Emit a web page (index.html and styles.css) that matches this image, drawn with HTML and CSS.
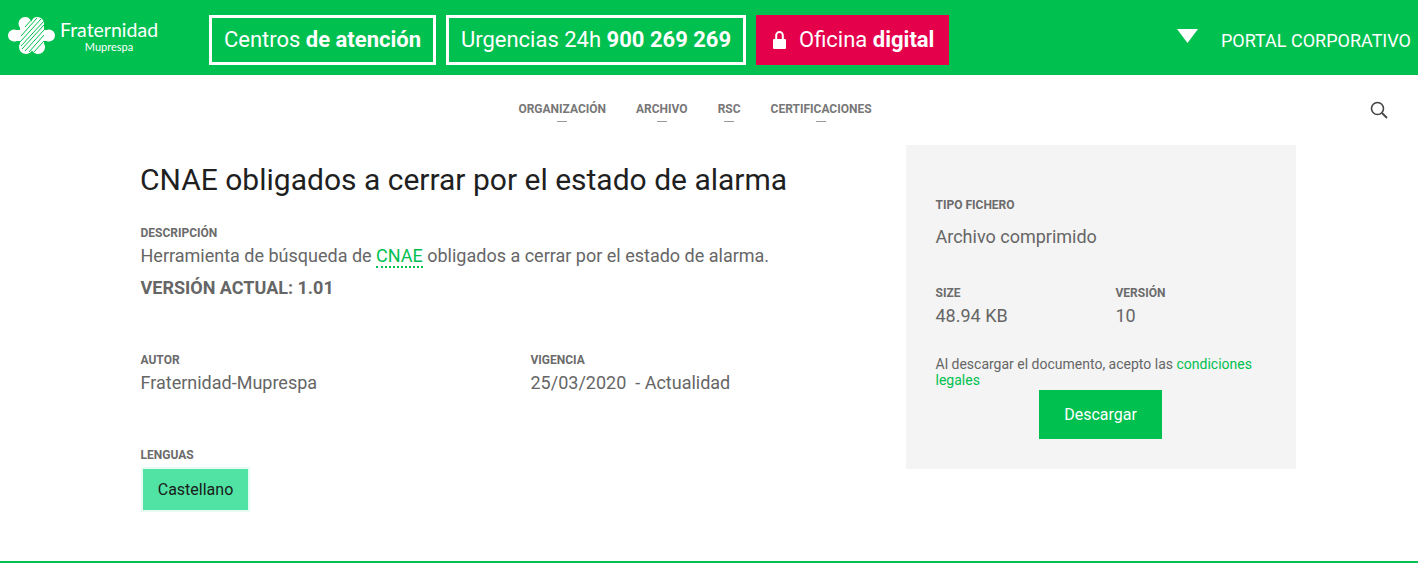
FILE: index.html
```html
<!DOCTYPE html>
<html lang="es">
<head>
<meta charset="utf-8">
<title>CNAE obligados a cerrar por el estado de alarma</title>
<link rel="stylesheet" href="styles.css">
</head>
<body>
<header class="topbar">
  <a class="logo" href="#">
    <svg class="logo-mark" width="47" height="37" viewBox="0 0 47 37">
      <defs>
        <clipPath id="clover">
          <circle cx="17" cy="6.5" r="6.5"/>
          <circle cx="29.5" cy="6.5" r="6.5"/>
          <circle cx="6" cy="18.5" r="6"/>
          <circle cx="41" cy="18.5" r="6"/>
          <circle cx="18" cy="30" r="7"/>
          <circle cx="30" cy="30" r="7"/>
          <rect x="6" y="13" width="35" height="11"/>
          <rect x="12" y="6" width="24" height="24"/>
        </clipPath>
      </defs>
      <g clip-path="url(#clover)">
        <rect width="47" height="37" fill="#fff"/>
        <path d="M17 10 25 1M13 19 29 1M12 25 33 2M13 29 36 4M14 32 36 8M17 34 36 13M21 35 36 18M25 36 36 24" stroke="#00c04f" stroke-width="1" fill="none"/>
      </g>
    </svg>
    <span class="logo-text">
      <span class="logo-name">Fraternidad</span>
      <span class="logo-sub">Muprespa</span>
    </span>
  </a>
  <a class="btn-outline btn-centros" href="#"><span>Centros <b>de atención</b></span></a>
  <a class="btn-outline btn-urg" href="#"><span>Urgencias 24h <b>900 269 269</b></span></a>
  <a class="btn-office" href="#">
    <svg width="13" height="18" viewBox="0 0 13 18"><path d="M1 8h11a1 1 0 0 1 1 1v8a1 1 0 0 1-1 1H1a1 1 0 0 1-1-1V9a1 1 0 0 1 1-1Z" fill="#fff"/><path d="M3.2 9V4.3a3.3 3.3 0 0 1 6.6 0V9" fill="none" stroke="#fff" stroke-width="2"/></svg>
    <span>Oficina <b>digital</b></span>
  </a>
  <a class="portal" href="#">
    <svg class="portal-caret" width="21" height="14" viewBox="0 0 21 14"><path d="M0 0h21L10.5 14Z" fill="#fff"/></svg>
    <span>PORTAL CORPORATIVO</span>
  </a>
</header>

<nav class="subnav">
  <a href="#">ORGANIZACIÓN</a>
  <a href="#">ARCHIVO</a>
  <a href="#">RSC</a>
  <a href="#">CERTIFICACIONES</a>
  <svg class="search" width="18" height="18" viewBox="0 0 18 18"><circle cx="7.5" cy="7.5" r="6" fill="none" stroke="#444" stroke-width="1.6"/><path d="m12 12 5 5" stroke="#444" stroke-width="1.8"/></svg>
</nav>

<main class="content">
  <section class="info">
    <h1>CNAE obligados a cerrar por el estado de alarma</h1>
    <div class="details">
      <h2 class="label">DESCRIPCIÓN</h2>
      <p class="text">Herramienta de búsqueda de <a class="glossary" href="#">CNAE</a> obligados a cerrar por el estado de alarma.</p>
      <p class="version">VERSIÓN ACTUAL: 1.01</p>
      <div class="meta">
        <div>
          <h2 class="label">AUTOR</h2>
          <p class="text">Fraternidad-Muprespa</p>
        </div>
        <div>
          <h2 class="label">VIGENCIA</h2>
          <p class="text">25/03/2020 &nbsp;- Actualidad</p>
        </div>
      </div>
      <h2 class="label lang-label">LENGUAS</h2>
      <a class="lang" href="#">Castellano</a>
    </div>
  </section>

  <aside class="panel">
    <h2 class="label">TIPO FICHERO</h2>
    <p class="text type">Archivo comprimido</p>
    <div class="stats">
      <div>
        <h2 class="label">SIZE</h2>
        <p class="text">48.94 KB</p>
      </div>
      <div>
        <h2 class="label">VERSIÓN</h2>
        <p class="text">10</p>
      </div>
    </div>
    <p class="legal">Al descargar el documento, acepto las <a href="#">condiciones legales</a></p>
    <a class="download" href="#">Descargar</a>
  </aside>
</main>
<div class="rule"></div>
</body>
</html>
```
FILE: styles.css
```css
* { box-sizing: border-box; }
html, body { margin: 0; padding: 0; }
body {
  height: 563px;
  overflow: hidden;
  background: #fff;
  color: #666;
  font-family: Roboto, "Liberation Sans", sans-serif;
}
a { text-decoration: none; color: inherit; }
h1, h2, p { margin: 0; }

.topbar {
  height: 75px;
  background: #00c04f;
  display: flex;
  align-items: flex-start;
  color: #fff;
  padding: 15px 0 0 8px;
}
.logo { display: flex; align-items: flex-start; width: 201px; height: 40px; padding-top: 2px; }
.logo-text { display: flex; flex-direction: column; align-items: center; margin-left: 4px; width: 100px; margin-top: 1px; }
.logo-name { font-family: Lato, sans-serif; font-weight: 400; font-size: 19.5px; line-height: 23px; }
.logo-sub { font-family: Lato, sans-serif; font-size: 11px; line-height: 11px; }

.btn-outline, .btn-office {
  height: 50px;
  display: flex;
  align-items: center;
  font-size: 22px;
  color: #fff;
  padding-bottom: 1px;
}
.btn-outline { border: 3px solid #fff; justify-content: center; padding-bottom: 2px; }
.btn-centros { width: 227px; }
.btn-urg { width: 300px; margin-left: 10px; }
.btn-office { width: 193px; margin-left: 10px; background: #e4004b; padding-left: 17px; gap: 13px; }
b { font-weight: 700; }

.portal {
  display: flex;
  align-items: center;
  height: 50px;
  margin-left: auto;
  padding-right: 7px;
  font-size: 18px;
  gap: 23px;
}
.portal-caret { margin-top: -8px; }

.subnav {
  position: relative;
  height: 70px;
  display: flex;
  justify-content: center;
  gap: 30px;
  padding: 27px 28px 0 0;
  font-size: 12px;
  font-weight: 700;
  color: #777;
}
.subnav a { position: relative; line-height: 14px; height: 14px; }
.subnav a::after {
  content: "";
  position: absolute;
  left: 50%;
  top: 19px;
  width: 10px;
  height: 1px;
  margin-left: -5px;
  background: #999;
}
.search { position: absolute; right: 30px; top: 26px; }

.content {
  display: flex;
  padding-left: 140px;
  height: 416px;
}
.info { width: 766px; padding-top: 17px; }
.details { margin-left: 0.5px; }
h1 { font-size: 30px; font-weight: 400; line-height: 36px; color: #1f1f1f; margin-bottom: 28px; }
.label { font-size: 12px; font-weight: 700; line-height: 14px; color: #6b6b6b; margin-bottom: 2px; }
.text { font-size: 18px; line-height: 28px; color: #666; }
.glossary { color: #00c04f; border-bottom: 2px dotted #00c04f; }
.version { font-size: 18px; font-weight: 700; line-height: 22px; margin-top: 7px; color: #666; }
.meta { display: grid; grid-template-columns: 390px 1fr; margin-top: 54px; }
.lang-label { margin-top: 51px; margin-bottom: 0; }
.lang {
  display: inline-block;
  margin: 7px 0 0 2.5px;
  width: 105px;
  height: 41px;
  line-height: 41px;
  text-align: center;
  background: #50e3a4;
  outline: 2px solid #e8fbf3;
  color: #1a1a1a;
  font-size: 16px;
}

.panel {
  width: 390px;
  height: 324px;
  background: #f4f4f4;
  padding: 53px 30px 0 29.5px;
}
.type { margin-top: 11px; }
.stats { display: grid; grid-template-columns: 180px 1fr; margin-top: 35px; }
.legal { font-size: 14px; line-height: 16px; margin-top: 26px; color: #666; }
.legal a { color: #00c04f; }
.download {
  display: block;
  width: 123px;
  height: 49px;
  line-height: 49px;
  margin: 2px 0 0 103.5px;
  text-align: center;
  background: #00c04f;
  color: #fff;
  font-size: 16px;
}
.rule { height: 2px; background: #00c04f; }
```
